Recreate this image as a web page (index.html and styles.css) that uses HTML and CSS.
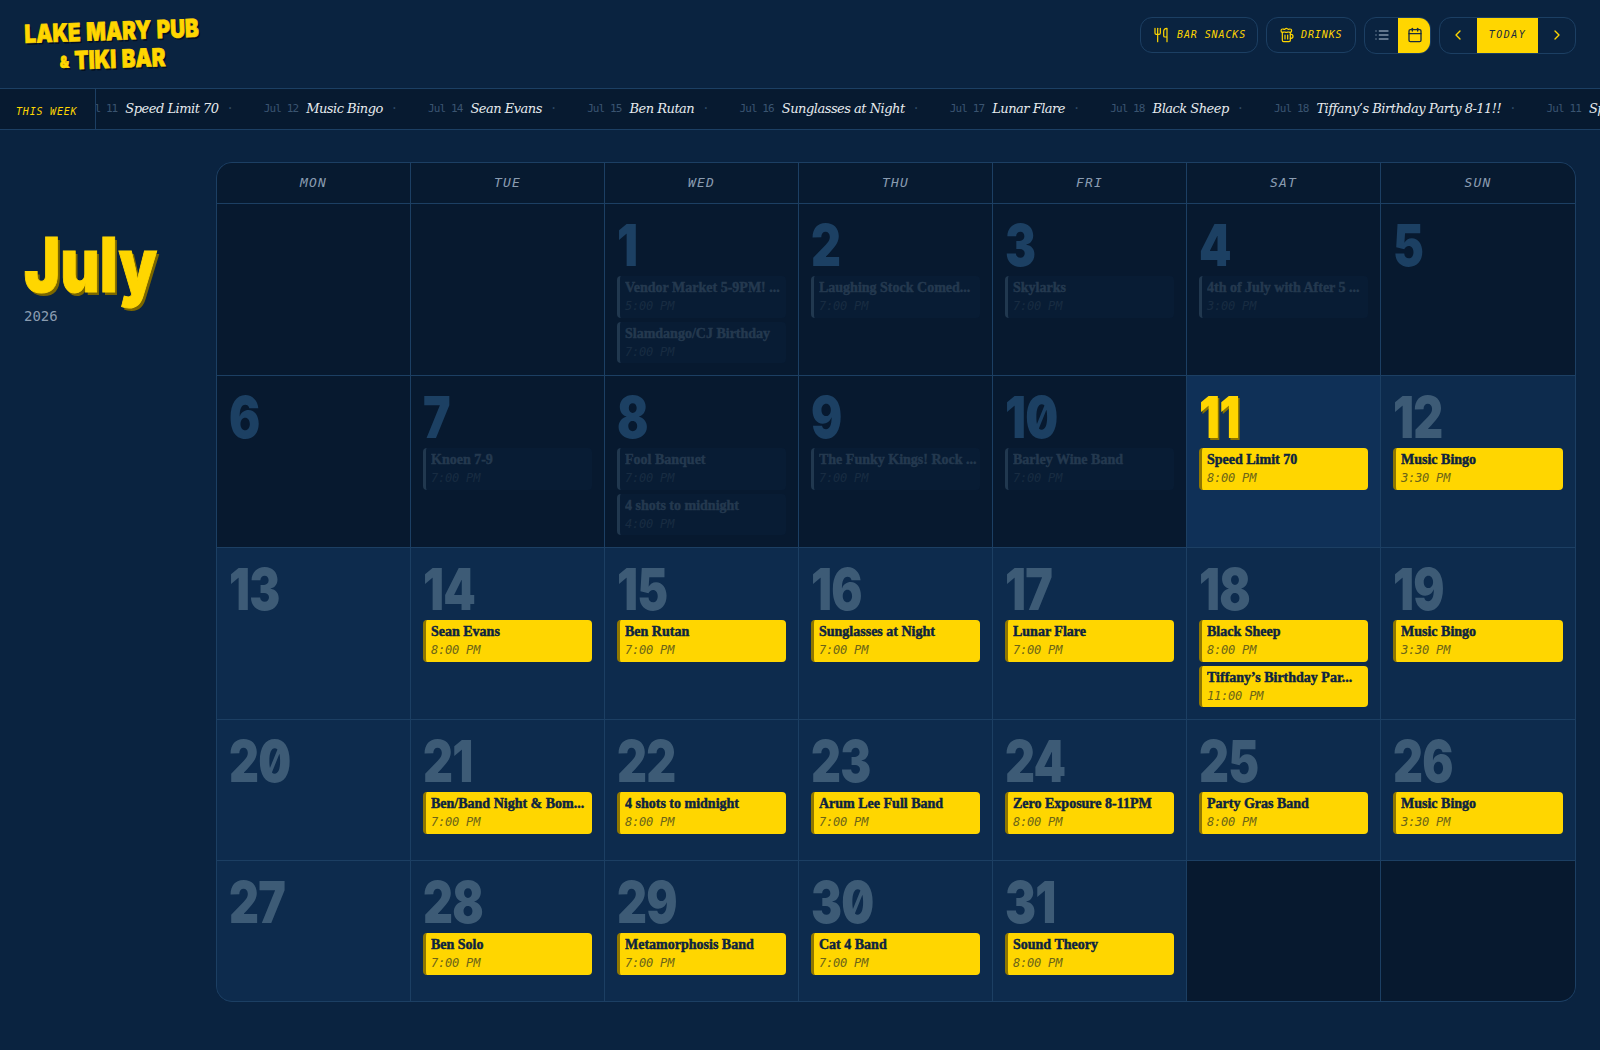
FILE: index.html
```html
<!DOCTYPE html>
<html lang="en">
<head>
<meta charset="utf-8">
<title>Lake Mary Pub &amp; Tiki Bar</title>
<link rel="stylesheet" href="styles.css">
</head>
<body>
<header class="topbar">
  <div class="logo"><div class="logo-line">LAKE MARY PUB</div><div class="logo-line"><span class="amp">&amp;</span> TIKI BAR</div></div>
  <div class="actions">
    <a class="pill pill-snacks"><svg class="ico" viewBox="0 0 24 24"><path d="M3 2v7c0 1.1.9 2 2 2h4a2 2 0 0 0 2-2V2"/><path d="M7 2v20"/><path d="M21 15V2a5 5 0 0 0-5 5v6c0 1.1.9 2 2 2h3Zm0 0v7"/></svg>BAR SNACKS</a>
    <a class="pill pill-drinks"><svg class="ico" viewBox="0 0 24 24"><path d="M17 11h1a3 3 0 0 1 0 6h-1"/><path d="M9 12v6"/><path d="M13 12v6"/><path d="M14 7.5c-1 0-1.44.5-3 .5s-2-.5-3-.5-1.72.5-2.5.5a2.5 2.5 0 0 1 0-5c.78 0 1.57.5 2.5.5S9.44 2 11 2s2 1.5 3 1.5 1.72-.5 2.5-.5a2.5 2.5 0 0 1 0 5c-.78 0-1.5-.5-2.5-.5Z"/><path d="M5 8v12a2 2 0 0 0 2 2h8a2 2 0 0 0 2-2V8"/></svg>DRINKS</a>
    <div class="toggle">
      <button class="seg seg-list"><svg class="ico" viewBox="0 0 24 24"><path d="M3 12h.01"/><path d="M3 18h.01"/><path d="M3 6h.01"/><path d="M8 12h13"/><path d="M8 18h13"/><path d="M8 6h13"/></svg></button>
      <button class="seg seg-cal"><svg class="ico" viewBox="0 0 24 24"><path d="M8 2v4"/><path d="M16 2v4"/><rect x="3" y="4" width="18" height="18" rx="2"/><path d="M3 10h18"/></svg></button>
    </div>
    <div class="nav">
      <button class="nav-arrow"><svg class="ico" viewBox="0 0 24 24"><path d="m15 18-6-6 6-6"/></svg></button>
      <button class="nav-today">TODAY</button>
      <button class="nav-arrow"><svg class="ico" viewBox="0 0 24 24"><path d="m9 18 6-6-6-6"/></svg></button>
    </div>
  </div>
</header>
<div class="ticker">
  <div class="ticker-label">THIS WEEK</div>
  <div class="ticker-view">
    <div class="ticker-track">
      <span class="tick"><span class="tick-date">Jul 11</span><span class="tick-title">Speed Limit 70</span><span class="tick-dot">·</span></span>
      <span class="tick"><span class="tick-date">Jul 12</span><span class="tick-title">Music Bingo</span><span class="tick-dot">·</span></span>
      <span class="tick"><span class="tick-date">Jul 14</span><span class="tick-title">Sean Evans</span><span class="tick-dot">·</span></span>
      <span class="tick"><span class="tick-date">Jul 15</span><span class="tick-title">Ben Rutan</span><span class="tick-dot">·</span></span>
      <span class="tick"><span class="tick-date">Jul 16</span><span class="tick-title">Sunglasses at Night</span><span class="tick-dot">·</span></span>
      <span class="tick"><span class="tick-date">Jul 17</span><span class="tick-title">Lunar Flare</span><span class="tick-dot">·</span></span>
      <span class="tick"><span class="tick-date">Jul 18</span><span class="tick-title">Black Sheep</span><span class="tick-dot">·</span></span>
      <span class="tick"><span class="tick-date">Jul 18</span><span class="tick-title">Tiffany’s Birthday Party 8-11!!</span><span class="tick-dot">·</span></span>
      <span class="tick"><span class="tick-date">Jul 11</span><span class="tick-title">Speed Limit 70</span><span class="tick-dot">·</span></span>
    </div>
  </div>
</div>
<main class="main">
  <aside class="side">
    <h1 class="month">July</h1>
    <div class="year">2026</div>
  </aside>
  <section class="cal">
    <div class="dow">MON</div><div class="dow">TUE</div><div class="dow">WED</div><div class="dow">THU</div><div class="dow">FRI</div><div class="dow">SAT</div><div class="dow">SUN</div>

    <div class="cell past"></div>
    <div class="cell past"></div>
    <div class="cell past"><div class="num">1</div><div class="ev"><div class="ev-t">Vendor Market 5-9PM! ...</div><div class="ev-h">5:00 PM</div></div><div class="ev"><div class="ev-t">Slamdango/CJ Birthday</div><div class="ev-h">7:00 PM</div></div></div>
    <div class="cell past"><div class="num">2</div><div class="ev"><div class="ev-t">Laughing Stock Comed...</div><div class="ev-h">7:00 PM</div></div></div>
    <div class="cell past"><div class="num">3</div><div class="ev"><div class="ev-t">Skylarks</div><div class="ev-h">7:00 PM</div></div></div>
    <div class="cell past"><div class="num">4</div><div class="ev"><div class="ev-t">4th of July with After 5 ...</div><div class="ev-h">3:00 PM</div></div></div>
    <div class="cell past"><div class="num">5</div></div>

    <div class="cell past"><div class="num">6</div></div>
    <div class="cell past"><div class="num">7</div><div class="ev"><div class="ev-t">Knoen 7-9</div><div class="ev-h">7:00 PM</div></div></div>
    <div class="cell past"><div class="num">8</div><div class="ev"><div class="ev-t">Fool Banquet</div><div class="ev-h">7:00 PM</div></div><div class="ev"><div class="ev-t">4 shots to midnight</div><div class="ev-h">4:00 PM</div></div></div>
    <div class="cell past"><div class="num">9</div><div class="ev"><div class="ev-t">The Funky Kings! Rock ...</div><div class="ev-h">7:00 PM</div></div></div>
    <div class="cell past"><div class="num">10</div><div class="ev"><div class="ev-t">Barley Wine Band</div><div class="ev-h">7:00 PM</div></div></div>
    <div class="cell today"><div class="num">11</div><div class="ev"><div class="ev-t">Speed Limit 70</div><div class="ev-h">8:00 PM</div></div></div>
    <div class="cell"><div class="num">12</div><div class="ev"><div class="ev-t">Music Bingo</div><div class="ev-h">3:30 PM</div></div></div>

    <div class="cell"><div class="num">13</div></div>
    <div class="cell"><div class="num">14</div><div class="ev"><div class="ev-t">Sean Evans</div><div class="ev-h">8:00 PM</div></div></div>
    <div class="cell"><div class="num">15</div><div class="ev"><div class="ev-t">Ben Rutan</div><div class="ev-h">7:00 PM</div></div></div>
    <div class="cell"><div class="num">16</div><div class="ev"><div class="ev-t">Sunglasses at Night</div><div class="ev-h">7:00 PM</div></div></div>
    <div class="cell"><div class="num">17</div><div class="ev"><div class="ev-t">Lunar Flare</div><div class="ev-h">7:00 PM</div></div></div>
    <div class="cell"><div class="num">18</div><div class="ev"><div class="ev-t">Black Sheep</div><div class="ev-h">8:00 PM</div></div><div class="ev"><div class="ev-t">Tiffany’s Birthday Par...</div><div class="ev-h">11:00 PM</div></div></div>
    <div class="cell"><div class="num">19</div><div class="ev"><div class="ev-t">Music Bingo</div><div class="ev-h">3:30 PM</div></div></div>

    <div class="cell"><div class="num">20</div></div>
    <div class="cell"><div class="num">21</div><div class="ev"><div class="ev-t">Ben/Band Night &amp; Bom...</div><div class="ev-h">7:00 PM</div></div></div>
    <div class="cell"><div class="num">22</div><div class="ev"><div class="ev-t">4 shots to midnight</div><div class="ev-h">8:00 PM</div></div></div>
    <div class="cell"><div class="num">23</div><div class="ev"><div class="ev-t">Arum Lee Full Band</div><div class="ev-h">7:00 PM</div></div></div>
    <div class="cell"><div class="num">24</div><div class="ev"><div class="ev-t">Zero Exposure 8-11PM</div><div class="ev-h">8:00 PM</div></div></div>
    <div class="cell"><div class="num">25</div><div class="ev"><div class="ev-t">Party Gras Band</div><div class="ev-h">8:00 PM</div></div></div>
    <div class="cell"><div class="num">26</div><div class="ev"><div class="ev-t">Music Bingo</div><div class="ev-h">3:30 PM</div></div></div>

    <div class="cell"><div class="num">27</div></div>
    <div class="cell"><div class="num">28</div><div class="ev"><div class="ev-t">Ben Solo</div><div class="ev-h">7:00 PM</div></div></div>
    <div class="cell"><div class="num">29</div><div class="ev"><div class="ev-t">Metamorphosis Band</div><div class="ev-h">7:00 PM</div></div></div>
    <div class="cell"><div class="num">30</div><div class="ev"><div class="ev-t">Cat 4 Band</div><div class="ev-h">7:00 PM</div></div></div>
    <div class="cell"><div class="num">31</div><div class="ev"><div class="ev-t">Sound Theory</div><div class="ev-h">8:00 PM</div></div></div>
    <div class="cell past"></div>
    <div class="cell past"></div>
  </section>
</main>
</body>
</html>
```
FILE: styles.css
```css
* { box-sizing: border-box; }
html, body { margin: 0; height: 100%; }
body {
  background: #0a2340;
  color: #e8edf2;
  font-family: "DejaVu Sans Mono", monospace;
  overflow: hidden;
}
button { font: inherit; border: 0; background: none; padding: 0; color: inherit; }

.topbar {
  height: 89px;
  border-bottom: 1px solid #1c3f63;
  display: flex;
  align-items: center;
  justify-content: space-between;
  padding: 0 24px;
}
.logo {
  flex: none;
  width: 215px;
  margin-left: 0;
  margin-right: -43px;
  margin-top: 8px;
  text-align: center;
  transform: rotate(-2deg) scaleX(.82);
  transform-origin: left center;
  color: #ffd600;
  font: 900 25px/28px Inter, sans-serif;
  text-shadow: 2px 2px 0 #04101f;
  -webkit-text-stroke: .8px #ffd600;
}
.logo-line { white-space: nowrap; word-spacing: 2px; }
.amp { font-size: 16px; vertical-align: 2px; }

.actions { display: flex; align-items: center; gap: 8px; margin-top: -18px; }
.ico { width: 16px; height: 16px; fill: none; stroke: currentColor; stroke-width: 2; stroke-linecap: round; stroke-linejoin: round; flex: none; }
.pill {
  height: 36px;
  display: flex;
  align-items: center;
  gap: 8px;
  padding: 0 12px;
  border: 1px solid #1c3f63;
  border-radius: 12px;
  color: #ffd600;
  font: italic 400 10px/1 "DejaVu Sans Mono", monospace;
  letter-spacing: .9px;
  white-space: nowrap;
}
.pill-snacks { width: 118px; }
.pill-drinks { width: 90px; gap: 6px; }
.pill .ico { stroke-width: 1.8; }
.toggle, .nav {
  display: flex;
  height: 37px;
  border: 1px solid #1c3f63;
  border-radius: 12px;
  overflow: hidden;
}
.seg { flex: 0 0 33px; display: flex; align-items: center; justify-content: center; }
.seg-list { color: #7f93a6; }
.seg-cal { background: #ffd600; color: #1a2c3e; }
.toggle { width: 67px; }
.nav { width: 137px; }
.nav-arrow { width: 37px; display: flex; align-items: center; justify-content: center; color: #ffd600; }
.nav-today {
  width: 62px;
  background: #ffd600;
  color: #1a2c3e;
  font: italic 400 10px/1 "DejaVu Sans Mono", monospace;
  letter-spacing: 1.5px;
}

.ticker {
  height: 41px;
  display: flex;
  background: #071a30;
  border-bottom: 1px solid #1c3f63;
}
.ticker-label {
  flex: 0 0 96px;
  padding: 5px 0 0 16px;
  border-right: 1px solid #1c3f63;
  display: flex;
  align-items: center;
  color: #ffd600;
  font: italic 400 10px/1 "DejaVu Sans Mono", monospace;
  letter-spacing: .8px;
  white-space: nowrap;
}
.ticker-view { flex: 1; min-width: 0; overflow: hidden; display: flex; align-items: center; }
.ticker-track { display: flex; white-space: nowrap; transform: translateX(-13px); margin-top: -2px; }
.tick { display: inline-flex; align-items: center; padding-right: 30px; }
.tick-date { color: #3a5470; font: 400 11px/1 "DejaVu Sans Mono", monospace; letter-spacing: -.9px; margin-right: 8px; }
.tick-title { color: #e6eaee; font: italic 400 13px/1 "DejaVu Serif", serif; letter-spacing: -.5px; }
.tick-dot { color: #2f4a66; font: 400 12px/1 "DejaVu Sans Mono", monospace; margin-left: 8px; }

.main { display: flex; padding: 32px 0 0 24px; }
.side { flex: 0 0 192px; padding-top: 62px; }
.month {
  margin: 0;
  color: #ffd600;
  font: 900 76px/80px Inter, sans-serif;
  transform: scaleX(.8);
  transform-origin: left center;
  text-shadow: 3px 3px 0 #7a6600;
  -webkit-text-stroke: 1px #ffd600;
}
.year { margin-top: 2px; font: 400 14px/20px "DejaVu Sans Mono", monospace; color: #8a9cb0; }

.cal {
  flex: none;
  display: grid;
  grid-template-columns: repeat(6, 193px) 194px;
  gap: 1px;
  background: #1c3f63;
  border: 1px solid #1c3f63;
  border-radius: 16px;
  overflow: hidden;
}
.dow {
  height: 40px;
  padding-bottom: 1px;
  background: #071a30;
  display: flex;
  align-items: center;
  justify-content: center;
  color: #8a9cb0;
  font: italic 400 13px/1 "DejaVu Sans Mono", monospace;
  letter-spacing: 1.2px;
}
.cell {
  min-height: 140px;
  min-width: 0;
  padding: 12px;
  background: #0d2b4d;
}
.cell.past { background: #07192f; }
.cell.today { background: #0f3057; }
.num {
  height: 54px;
  margin-bottom: 6px;
  color: #3d5b76;
  font: 900 58px/58px Inter, sans-serif;
  font-feature-settings: "zero" 1;
  transform: scaleX(.8);
  transform-origin: left center;
  letter-spacing: -1px;
  white-space: nowrap;
}
.past .num { color: #1c4063; }
.today .num { color: #ffd600; text-shadow: 2px 2px 0 #8a7300; }
.ev {
  height: 41.5px;
  margin-bottom: 4px;
  padding: 2px 2px 0 5px;
  background: #ffd600;
  border-left: 3px solid #8f7700;
  border-radius: 4px;
}
.ev:last-child { margin-bottom: 0; }
.ev-t {
  color: #0c2340;
  font: 700 14px/19px "Liberation Serif", serif;
  -webkit-text-stroke: .45px #0c2340;
  white-space: nowrap;
  overflow: hidden;
  text-overflow: ellipsis;
}
.ev-h {
  margin-top: 1px;
  color: #6b6418;
  font: italic 400 12px/16px "DejaVu Sans Mono", monospace;
  letter-spacing: -.2px;
}
.past .ev { background: #081c34; border-left-color: #21384f; }
.past .ev-t { color: #24394f; -webkit-text-stroke-color: #24394f; }
.past .ev-h { color: #182c42; }
```
